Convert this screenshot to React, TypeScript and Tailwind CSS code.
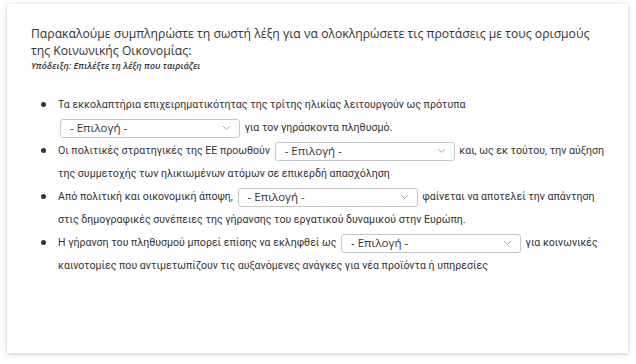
import React from "react";

function Sel({ w = 180 }: { w?: number }) {
  return (
    <span
      className="inline-flex items-center justify-between align-middle h-[19px] mx-[2px] rounded-[3px] border border-[#c8c8c8] bg-white pl-[9px] pr-[6px] text-[11.5px] leading-none text-[#333]"
      style={{ width: w, fontFamily: '"Open Sans", sans-serif' }}
    >
      <span>- Επιλογή -</span>
      <svg width="9" height="6" viewBox="0 0 9 6" className="mr-[2px]">
        <path d="M1 1l3.5 3.5L8 1" fill="none" stroke="#aaa" strokeWidth="1" />
      </svg>
    </span>
  );
}

function Item({ children }: { children: React.ReactNode }) {
  return (
    <li className="flex">
      <span className="w-[17px] shrink-0 flex justify-start pt-[9px]">
        <span className="block w-[5px] h-[5px] rounded-full bg-[#333]" />
      </span>
      <span className="flex-1">{children}</span>
    </li>
  );
}

export default function App() {
  return (
    <div className="w-[636px] h-[364px] bg-white pt-[4px] pl-[7px]" style={{ fontFamily: '"Open Sans", "Noto Sans", sans-serif' }}>
      <div className="w-[621px] h-[349px] bg-white shadow-[0_1px_5px_rgba(0,0,0,0.22)] pl-[24px] pr-[24px] pt-[21px]">
        <div className="text-[12.2px] leading-[17px] text-[#333]">
          Παρακαλούμε συμπληρώστε τη σωστή λέξη για να ολοκληρώσετε τις προτάσεις με τους ορισμούς της Κοινωνικής Οικονομίας:
        </div>
        <div className="text-[9px] leading-[13px] italic font-semibold text-[#333]">Υπόδειξη: Επιλέξτε τη λέξη που ταιριάζει</div>
        <ul className="mt-[21px] -mr-[8px] pl-[10px] text-[10.6px] leading-[23px] text-[#333]" style={{ fontFamily: 'Roboto, "Noto Sans", sans-serif' }}>
          <Item>
            Τα εκκολαπτήρια επιχειρηματικότητας της τρίτης ηλικίας λειτουργούν ως πρότυπα <Sel /> για τον γηράσκοντα πληθυσμό.
          </Item>
          <Item>
            Οι πολιτικές στρατηγικές της ΕΕ προωθούν <Sel /> και, ως εκ τούτου, την αύξηση της συμμετοχής των ηλικιωμένων ατόμων σε επικερδή απασχόληση
          </Item>
          <Item>
            Από πολιτική και οικονομική άποψη, <Sel /> φαίνεται να αποτελεί την απάντηση στις δημογραφικές συνέπειες της γήρανσης του εργατικού δυναμικού στην Ευρώπη.
          </Item>
          <Item>
            Η γήρανση του πληθυσμού μπορεί επίσης να εκληφθεί ως <Sel /> για κοινωνικές καινοτομίες που αντιμετωπίζουν τις αυξανόμενες ανάγκες για νέα προϊόντα ή υπηρεσίες
          </Item>
        </ul>
      </div>
    </div>
  );
}
